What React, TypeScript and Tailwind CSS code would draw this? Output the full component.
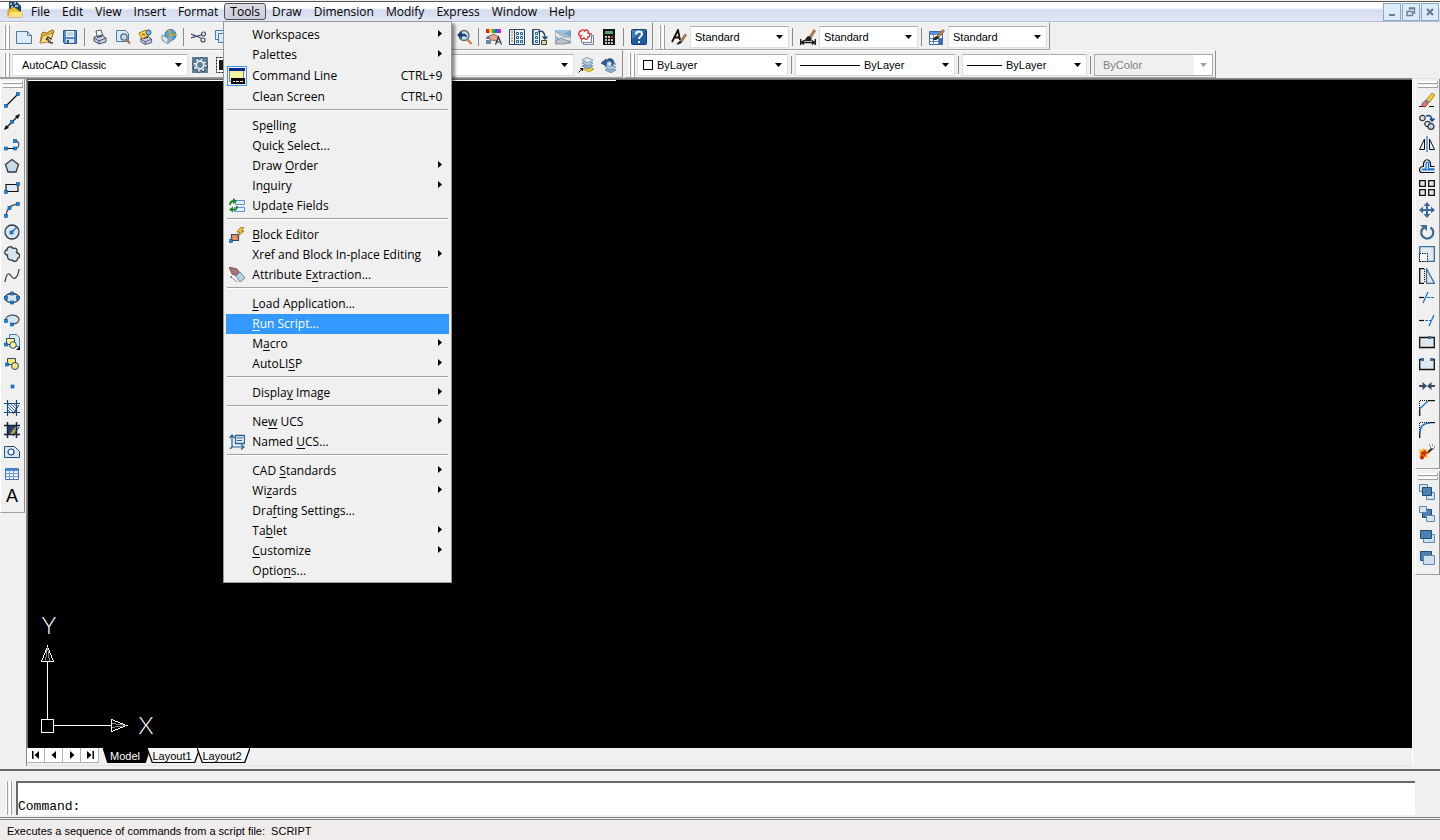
import { Fragment } from "react";
import type { ReactNode } from "react";

const INK = "#111111";
const BLUE = "#1a72cf";
const STEEL = "#3f6b99";
const NAVY = "#1f4e79";

function Dot({ x, y }: { x: number; y: number }) {
  return <rect x={x} y={y} width="3" height="3" fill="#1585e8" stroke="#0a4d93" strokeWidth=".6" />;
}

function Layers({ x, y }: { x: number; y: number }) {
  return (
    <g stroke="#5b7da3" strokeWidth=".7">
      <path d={`M${x} ${y + 6}l5-2.500 6 2.500-5 3z`} fill="#8fb0d2" />
      <path d={`M${x} ${y + 3}l5-2.500 6 2.500-5 3z`} fill="#b9cfe6" />
      <path d={`M${x} ${y}l5-2.500 6 2.500-5 3z`} fill="#dce8f3" />
    </g>
  );
}

const printer = (
  <g stroke="#4b5573" strokeWidth="1">
    <path d="M5 7L4 2l5-1 2 6" fill="#fff" />
    <path d="M2 8l8-2 4 3v4l-7 2-5-3z" fill="#c7cddd" />
    <path d="M2 9l5 3 7-3M7 12v3" fill="none" />
    <path d="M5 8.500l5-1.500" stroke="#222b45" />
  </g>
);

const ICONS: Record<string, ReactNode> = {
  new: <path d="M.5 2.500h11l4 4v8H.5zM11.500 2.500v4h4" fill="#dcebf5" stroke="#447ea4" />,
  open: (
    <>
      <path d="M1 14L3 4l3-1 1 1.500L13 1l2 1-3 9z" fill="#e8b84a" stroke="#8f6717" />
      <path d="M1 14l3-7 10-3-3 9z" fill="#f9dc83" stroke="#a97b1e" strokeWidth=".8" />
      <path d="M14 14c-4 0-5-2-5-4M7 11l2-3 3 2" fill="none" stroke="#3a3f49" strokeWidth="1.500" />
    </>
  ),
  save: (
    <>
      <path d="M1.500 1.500h13v13h-12l-1-1z" fill="#4e8cc8" stroke="#28598c" />
      <path d="M4 2h8v6H4z" fill="#eef4f9" />
      <path d="M5 4h6M5 6h6" stroke="#9ab6cf" />
      <path d="M4 10h8v4H4z" fill="#d9e3ec" />
      <path d="M5 11h2v3H5z" fill="#28598c" />
    </>
  ),
  plot: printer,
  preview: (
    <>
      <path d="M1.500 12.500v-11h9l3 3v8z" fill="#dcebf5" stroke="#447ea4" />
      <circle cx="9" cy="8" r="3.200" fill="#bcdcf4" stroke="#5a6a7d" strokeWidth="1.300" />
      <path d="M11.500 10.500L15 14.500" stroke="#b5713a" strokeWidth="2" />
    </>
  ),
  publish: (
    <>
      <g transform="translate(1 2) scale(.9)">{printer}</g>
      <path d="M1 4l7-3 3 5-7 4z" fill="#ffd445" stroke="#a8780d" />
      <circle cx="10.500" cy="3.500" r="2.500" fill="#7db4e2" stroke="#28598c" />
      <path d="M4 5l3 1" stroke="#5a4207" />
    </>
  ),
  globe: (
    <>
      <circle cx="9.500" cy="6" r="5.500" fill="#4aa3de" stroke="#2a6c9e" />
      <path d="M7 1c3 1 1 4 3 5s4-2 5 0M9 1v10" fill="none" stroke="#e9a22c" strokeWidth="1.500" />
      <path d="M11 3l3 1-1 3z" fill="#4fae4c" />
      <path d="M1 6l6 3v6l-6-4z" fill="#dbe5ee" stroke="#7890a5" />
      <path d="M7 9l4-1v4l-4 3z" fill="#8ea6bc" />
    </>
  ),
  cut: (
    <g fill="none" stroke="#3a4a66" strokeWidth="1.200">
      <path d="M0 5l10 4M0 9l10-3" />
      <circle cx="12.500" cy="5" r="2" />
      <circle cx="12" cy="11" r="2" />
    </g>
  ),
  copy: (
    <g fill="#dcebf5" stroke="#447ea4">
      <path d="M1.500 1.500h10v9h-10z" />
      <path d="M4.500 4.500h10v9h-10z" />
    </g>
  ),
  zoomPrev: (
    <>
      <circle cx="8" cy="6.500" r="5" fill="#c5dcef" stroke="#56697f" strokeWidth="1.300" />
      <path d="M1 6l5-4v3c3-1 5 0 5 4-1-2-3-2-5-1.500V10z" fill="#183f6f" />
      <path d="M11.500 10.500l4 4.500" stroke="#c8793b" strokeWidth="2" />
    </>
  ),
  properties: (
    <>
      <path d="M0 0h3v4H0z" fill="#e0231c" />
      <path d="M3 0h3v4H3z" fill="#f0d020" />
      <path d="M6 0h3v4H6z" fill="#2fae3b" />
      <path d="M9 0h3v4H9z" fill="#245ee0" />
      <path d="M12 0h3v4h-3z" fill="#d11fc4" />
      <path d="M1 8l7-3 5 3-2 4-6-1z" fill="#e0a58a" stroke="#8c4f3a" strokeWidth=".8" />
      <path d="M0 9h4M0 12h5M0 14h5" stroke="#3665a0" strokeWidth="1.300" />
      <path d="M9.500 15.500L12.500 8l3 7.500M10.500 13h4" fill="none" stroke="#234" strokeWidth="1.200" />
    </>
  ),
  designCenter: (
    <>
      <path d="M.5.5h15v15H.5z" fill="#e9f1f8" stroke="#22466e" />
      <path d="M5.500 1v14" stroke="#22466e" />
      <path d="M2 3h2M2 6h2M2 9h2M2 12h2" stroke="#d19b1a" strokeWidth="1.500" />
      <path d="M7.500 3.500h2v2h-2zM11.500 3.500h2v2h-2zM7.500 7.500h2v2h-2zM11.500 7.500h2v2h-2zM7.500 11.500h2v2h-2zM11.500 11.500h2v2h-2z" fill="#fff" stroke="#245a95" />
    </>
  ),
  toolPalettes: (
    <>
      <path d="M.5.5h7v15h-7z" fill="#e9f1f8" stroke="#22466e" />
      <path d="M3.500 3.500h2v2h-2zM3.500 7.500h2v2h-2zM3.500 11.500h2v2h-2z" fill="#fff" stroke="#245a95" />
      <path d="M1.500 1v14" stroke="#5d83ad" />
      <path d="M6 3c5-2 7 1 7 6M10.500 7.500L13 10l2.500-2.500" fill="none" stroke="#1f4e79" strokeWidth="1.500" />
      <path d="M9.500 11.500h5v4h-5z" fill="#f6d86d" stroke="#22466e" />
    </>
  ),
  sheetSet: (
    <>
      <path d="M0 1h16v14H0z" fill="#9fc0da" />
      <path d="M0 2l9 6 7 0v4l-8 1-8-6z" fill="#dfe4e8" stroke="#8b979f" strokeWidth=".8" />
      <path d="M0 12l6-3 9 4-5 2H0z" fill="#b9c2c9" stroke="#75828c" strokeWidth=".8" />
      <path d="M9 5l7-4v6z" fill="#6fa1c9" />
    </>
  ),
  markup: (
    <>
      <path d="M5.500 6.500h10v9h-10z" fill="#eceff5" stroke="#76809c" />
      <path d="M3.500 4.500h10v9h-10z" fill="#fff" stroke="#76809c" />
      <path d="M3 2c1-2 3-1 3.500 0C8 0 11 1 10 4c3 0 2 4 0 4 0 3-3 3-4 1-2 2-5 0-3-2C0 7 0 3 3 2z" fill="#fff" stroke="#e22c2c" strokeWidth="1.400" />
    </>
  ),
  calc: (
    <>
      <path d="M2 0h12v16H2z" fill="#141414" />
      <path d="M4 2h8v3H4z" fill="#58a56a" />
      <path d="M4 8h2M7 8h2M4 11h2M7 11h2M10 11h2M4 14h2M7 14h2M10 14h2" stroke="#fff" strokeWidth="1.600" />
      <path d="M10 8h2" stroke="#e22" strokeWidth="1.600" />
    </>
  ),
  help: (
    <>
      <rect x=".5" y=".5" width="15" height="15" rx="1" fill="#1d5c9e" stroke="#123f73" />
      <path d="M1 1h14L1 10z" fill="#3e80bf" />
      <path d="M5 5.500c0-4 6-4 6-.5 0 2.500-3 2.500-3 5M8 12v2" fill="none" stroke="#fff" strokeWidth="2" />
    </>
  ),
  textStyle: (
    <>
      <path d="M1 13L7 1l2 10M3 8.500h5.500" fill="none" stroke={INK} strokeWidth="1.800" />
      <path d="M9 12l5-7 1.500 1-4.500 7z" fill="#c98246" stroke="#704521" strokeWidth=".6" />
      <path d="M5 15c2 0 2-3 4-3l2 1c-1 2-4 3-6 2z" fill="#222" />
    </>
  ),
  dimStyle: (
    <>
      <path d="M.7 10v6M15.300 10v6M1 13.500h14M4 11.500l-2.500 2 2.500 2M12 11.500l2.500 2-2.500 2" fill="none" stroke={INK} strokeWidth="1.300" />
      <path d="M9 8l5-7.500L15.500 2 11 9z" fill="#c98246" stroke="#704521" strokeWidth=".6" />
      <path d="M2 12c4 0 4-5 7-5l2.500 2v3z" fill="#222" />
    </>
  ),
  tableStyle: (
    <>
      <path d="M.5 2.500h13v13H.5z" fill="#fff" stroke="#3a6cb0" />
      <path d="M1 3h12v3H1z" fill="#5d92d8" />
      <path d="M1 9.500h12M1 12.500h12M4.500 6v9M9.500 6v9" stroke="#5d86bd" />
      <path d="M10 10h3v5h-3z" fill="#3a6cb0" />
      <path d="M8 7l6-6.500 1.500 1.500L10 8.500z" fill="#c98246" stroke="#704521" strokeWidth=".6" />
      <path d="M3 11c2 0 2-4 5-4l2 1.500c-1 2-4 3.500-7 2.500z" fill="#222" />
    </>
  ),
  gear: (
    <>
      <path d="M0 0h16v16H0z" fill="#5d8099" />
      <circle cx="8" cy="8" r="6" fill="none" stroke="#2f3d48" strokeWidth="3.500" strokeDasharray="2.400 2.300" />
      <circle cx="8" cy="8" r="5.600" fill="none" stroke="#e3ebf0" strokeWidth="2.500" strokeDasharray="1.800 2.600" />
      <circle cx="8" cy="8" r="3.800" fill="#5d8099" stroke="#e9eff3" strokeWidth="1.800" />
    </>
  ),
  myWorkspace: (
    <>
      <path d="M1.500.5h14v15h-14z" fill="#fff" stroke={INK} strokeDasharray="2 1" />
      <path d="M4 3h10v10H4z" fill="#1b1b1b" />
    </>
  ),
  layerCurrent: (
    <>
      <path d="M5 12l5-2.500 6 2.500-5 3z" fill="#f4cf35" stroke="#a07d0c" strokeWidth=".7" />
      <Layers x={4} y={3} />
      <path d="M.5 15.500l4-4M2 11.500h2.500V14" fill="none" stroke={INK} />
    </>
  ),
  layerPrev: (
    <>
      <Layers x={4} y={7} />
      <path d="M0 6l5-4v2.500c1-4 8-4 8 1 0 2-2 3-3 3 2-3 0-5-2-4.500-2 0-3 2-3 5z" fill="#2b5c96" stroke="#183f6f" strokeWidth=".6" />
    </>
  ),

  // draw toolbar
  line: (
    <>
      <path d="M2 14L14 2" stroke={INK} strokeWidth="1.300" />
      <Dot x={.5} y={12.5} />
      <Dot x={12.5} y={.5} />
    </>
  ),
  xline: (
    <>
      <path d="M1 15L15 1" stroke={INK} strokeWidth="1.300" />
      <path d="M0 16l2-5 3 3zM16 0l-5 2 3 3z" fill={INK} />
      <Dot x={6.5} y={6.5} />
    </>
  ),
  pline: (
    <>
      <path d="M2 12.500h9" stroke={INK} />
      <path d="M11 5c5 0 5 7 0 7.500" fill="none" stroke="#46618a" strokeWidth="1.300" />
      <Dot x={.5} y={11} />
      <Dot x={9.5} y={11} />
      <Dot x={9.5} y={3.5} />
    </>
  ),
  polygon: <path d="M8 1.500l6.500 5-2.500 7.500H4L1.500 6.500z" fill="#c8dbea" stroke="#303841" strokeWidth="1.300" />,
  rectangle: (
    <>
      <path d="M2 4.500h12v7H2z" fill="#dce9f4" stroke={INK} strokeWidth="1.200" />
      <Dot x={.5} y={10.5} />
      <Dot x={12.5} y={2.5} />
    </>
  ),
  arc: (
    <>
      <path d="M2 14Q3 3 14 2" fill="none" stroke="#46515e" strokeWidth="1.300" />
      <Dot x={.5} y={12.5} />
      <Dot x={4} y={4.5} />
      <Dot x={12.5} y={.5} />
    </>
  ),
  circle: (
    <>
      <circle cx="8" cy="8" r="7" fill="#d6e5f2" stroke="#303841" strokeWidth="1.300" />
      <path d="M8 8l4.500-4.500" stroke={BLUE} strokeWidth="1.500" />
      <Dot x={6} y={7} />
    </>
  ),
  revcloud: <path d="M3.500 9C0 9 0 4 3 4c0-4 5-4 6-1.500 3-1 5 1 3.500 4 4 1 4 5 1 6 0 3-4 4-5 1.500C5 15 3 12 3.500 9z" fill="#d8e4ee" stroke="#303841" strokeWidth="1.300" />,
  spline: <path d="M1 14C3 2 6 6 8 9s6 1 7-8" fill="none" stroke="#3a434d" strokeWidth="1.300" />,
  ellipse: (
    <>
      <ellipse cx="8" cy="8" rx="7" ry="4.500" fill="#d6e5f2" stroke="#303841" strokeWidth="1.300" />
      <Dot x={6.5} y={2} />
      <Dot x={6.5} y={11} />
      <Dot x={.5} y={6.5} />
      <Dot x={12.5} y={6.5} />
    </>
  ),
  ellipseArc: (
    <>
      <path d="M2 9C0 2 14 1 15 7c0 4-4 5-7 5" fill="#d6e5f2" stroke="#46515e" strokeWidth="1.300" />
      <Dot x={.5} y={7.500} />
      <Dot x={6.5} y={11} />
    </>
  ),
  insertBlock: (
    <>
      <path d="M5.500.5h7l3 3v9h-10z" fill="#d8e8f3" stroke="#447ea4" />
      <path d="M2.500 4.500h8v6h-8z" fill="#ffef8e" stroke={NAVY} />
      <circle cx="9" cy="11" r="3.300" fill="#ffef8e" stroke={NAVY} />
      <path d="M16 12v4h-4z" fill={INK} />
      <Dot x={.5} y={9} />
    </>
  ),
  makeBlock: (
    <>
      <path d="M3.500 2.500h8v6h-8z" fill="#ffe26a" stroke={NAVY} />
      <circle cx="11" cy="10" r="3.500" fill="#f5e27c" stroke={NAVY} />
      <Dot x={1.5} y={7} />
    </>
  ),
  point: <Dot x={7} y={7} />,
  hatch: (
    <>
      <path d="M4 4l8 8M4 7l5 5M7 4l5 5M4 10l2 2M10 4l2 2" stroke="#3d6f9f" />
      <path d="M3.500 0v16M12.500 0v16M0 3.500h16M0 12.500h16" stroke="#1d4a78" strokeWidth="1.200" />
      <path d="M9 14l6-9" stroke="#1d4a78" />
    </>
  ),
  gradient: (
    <>
      <path d="M4 4h8v8H4z" fill="#2c4569" />
      <path d="M12 4v8H6z" fill="#b7a45a" />
      <path d="M3.500 0v16M12.500 0v16M0 3.500h16M0 12.500h16" stroke="#14253d" strokeWidth="1.500" />
      <path d="M9 14l6-9" stroke="#14253d" />
    </>
  ),
  region: (
    <>
      <path d="M.5 2.500h10l5 5v6H.5z" fill="#d8e8f4" stroke={NAVY} />
      <circle cx="7" cy="8" r="3" fill="#f4f8fb" stroke={NAVY} strokeWidth="1.200" />
    </>
  ),
  table: (
    <>
      <path d="M1.500 2.500h13v11h-13z" fill="#eef4fc" stroke="#4575bb" />
      <path d="M2 3h12v2H2z" fill="#4f86d2" />
      <path d="M2 7.500h12M2 10.500h12M5.500 5v8M9.500 5v8" stroke="#6e98d1" />
    </>
  ),

  // modify toolbar
  erase: (
    <>
      <path d="M0 14.500h7M10 14.500h5" stroke={INK} />
      <path d="M7 8l6-7 3 2-6 8z" fill="#f4c62f" stroke="#8a6a10" strokeWidth=".7" />
      <path d="M6 9l1.500-2 3 3L9 12z" fill="#5d92c9" />
      <path d="M3 12l3-3.500L9 12l-3 3-3-1z" fill="#e2766b" stroke="#8c352c" strokeWidth=".7" />
    </>
  ),
  copyObject: (
    <g stroke="#303841" strokeWidth="1.200">
      <circle cx="3.500" cy="4" r="2.700" fill="#dbe6ef" />
      <circle cx="8.500" cy="10" r="2.700" fill="#dbe6ef" />
      <circle cx="12" cy="12.500" r="2.900" fill="#c5d5e3" />
      <path d="M7 2c4-1 6 0 6 4M11 4.500L13 7l2.500-2.500" fill="none" stroke="#1c4f86" strokeWidth="1.600" />
    </g>
  ),
  mirror: (
    <>
      <path d="M5.500 3v10.500h-5zM10.500 3v10.500h5z" fill="#e8eef3" stroke={INK} />
      <path d="M8 0v16" stroke={BLUE} strokeWidth="1.200" />
    </>
  ),
  offset: (
    <>
      <path d="M15.500 14.500H3c-3.500 0-3.500-6 1.500-6C3.500-.5 12.500-.5 11.500 8.500h4" fill="#e8f1f8" stroke={INK} strokeWidth="1.200" />
      <path d="M15.500 11.800H4c-1.500-.3-1-1 3-1V6c0-2.500 2.500-2.500 2.500 0v4.800h6" fill="none" stroke={BLUE} strokeWidth="1.200" />
    </>
  ),
  array: (
    <path d="M.7.7h5.600v5.600H.7zM9.700.7h5.600v5.600H9.700zM.7 9.700h5.600v5.600H.7zM9.700 9.700h5.600v5.600H9.700z" fill="#e2ebf3" stroke={INK} strokeWidth="1.300" />
  ),
  move: (
    <>
      <path d="M8 2v12M2 8h12" stroke={STEEL} strokeWidth="2" />
      <path d="M8 0l3.500 4h-7zM8 16l3.500-4h-7zM0 8l4-3.500v7zM16 8l-4-3.500v7z" fill={STEEL} />
    </>
  ),
  rotate: (
    <>
      <path d="M5 3.500a6 6 0 1 0 6.500 0" fill="none" stroke={STEEL} strokeWidth="2.200" />
      <path d="M1 1h7v6z" fill={STEEL} />
    </>
  ),
  scale: (
    <>
      <path d="M.7.7h14.600v14.600H.7z" fill="#e2ebf4" stroke={STEEL} strokeWidth="1.300" />
      <path d="M.5 7.500h8v8h-8z" fill="#f6f9fb" stroke={INK} strokeDasharray="1.500 1" />
    </>
  ),
  stretch: (
    <>
      <path d="M7.500.5v15h8z" fill="#dce8f2" stroke={STEEL} strokeWidth="1.300" />
      <path d="M5 .7H.7v14.600H5" fill="none" stroke={INK} strokeWidth="1.300" />
      <path d="M5.500 1v14" stroke={INK} strokeDasharray="1 1" />
    </>
  ),
  trim: (
    <>
      <path d="M0 7.500h5" stroke={INK} strokeWidth="1.200" />
      <path d="M8 7.500h8" stroke={BLUE} strokeDasharray="3 1" />
      <path d="M4 13L9 2" stroke={BLUE} strokeWidth="1.300" />
    </>
  ),
  extend: (
    <>
      <path d="M0 8.500h5" stroke={INK} strokeWidth="1.200" />
      <path d="M6 8.500h6" stroke={BLUE} strokeDasharray="3 1" />
      <path d="M10 14l5-11" stroke={BLUE} strokeWidth="1.300" />
    </>
  ),
  breakPoint: (
    <>
      <path d="M.7 3.500h14.600v10H.7z" fill="#dfe8f0" stroke={INK} strokeWidth="1.300" />
      <path d="M9 2h3v3H9z" fill={STEEL} />
    </>
  ),
  breakGap: (
    <>
      <path d="M1 3h14v11H1z" fill="#dfe8f0" />
      <path d="M3 3.500H.7v10h14.600v-10H13" fill="none" stroke={INK} strokeWidth="1.300" />
      <path d="M2 2h3v3H2zM11 2h3v3h-3z" fill={STEEL} />
    </>
  ),
  join: (
    <>
      <path d="M0 8h5M11 8h5" stroke={INK} strokeWidth="1.500" />
      <path d="M3.500 4L8 8l-4.500 4zM12.500 4L8 8l4.500 4z" fill="#2d4f6c" />
    </>
  ),
  chamfer: (
    <>
      <path d="M.7 16V8.500M9 .7h7" stroke={INK} strokeWidth="1.300" />
      <path d="M.5 8V.5H8" fill="none" stroke={INK} strokeDasharray="1 1" />
      <path d="M1 8.500L9 1" stroke={BLUE} strokeWidth="1.300" />
    </>
  ),
  fillet: (
    <>
      <path d="M.7 16V9M9 .7h7" stroke={INK} strokeWidth="1.300" />
      <path d="M.5 8V.5H8" fill="none" stroke={INK} strokeDasharray="1 1" />
      <path d="M1 11C1 4 4 1.500 11 1" fill="none" stroke={BLUE} strokeWidth="1.600" />
    </>
  ),
  explode: (
    <>
      <path d="M0 5l3 1 1-2 2 2 3-1-1 3 3 1-3 2 1 3-3-1-2 2-1-3-3 1 1-3-2-1 2-1z" fill="#f6b921" />
      <path d="M2 8l3-1 1-2 1 3 3 1-3 1-1 3-2-2-2 1z" fill="#dc2b1e" />
      <circle cx="3" cy="13.500" r="2" fill="#c3241a" />
      <path d="M8 8l4-4 2 1-4 4z" fill="#2d2d33" />
      <path d="M11 3h1M13 1h1M15 3h1M13 5h2M10 1h1" stroke="#5c7896" strokeWidth="1.500" />
    </>
  ),

  // draw order toolbar
  bringFront: (
    <>
      <path d="M.5.5h8v7h-8zM7.500 8.500h8v7h-8z" fill="#d5e4ef" stroke="#5b87b2" />
      <path d="M3.500 3.500h9v8h-9z" fill="#4c7fb2" stroke={NAVY} />
    </>
  ),
  sendBack: (
    <>
      <path d="M3.500 3.500h9v8h-9z" fill="#4c7fb2" stroke={NAVY} />
      <path d="M.5.5h7v6h-7zM7.500 9.500h8v6h-8z" fill="#d5e4ef" stroke="#5b87b2" />
    </>
  ),
  bringAbove: (
    <>
      <path d="M4.500 6.500h11v8h-11z" fill="#cfe0ec" stroke="#5b87b2" />
      <path d="M1.500 2.500h11v8h-11z" fill="#4c7fb2" stroke={NAVY} />
    </>
  ),
  sendUnder: (
    <>
      <path d="M1.500 1.500h11v9h-11z" fill="#4c7fb2" stroke={NAVY} />
      <path d="M4.500 5.500h11v9h-11z" fill="#cfe0ec" stroke="#5b87b2" />
    </>
  ),

  // tools menu
  commandLine: (
    <>
      <path d="M.5.500h14v13H.5z" fill="#f4f3a0" stroke="#85858a" />
      <path d="M0 0h16v3H0z" fill="#06298f" />
      <path d="M2 10h14v6H2z" fill="#0b0b0b" />
      <path d="M4 13.500h2M7 13.500h3M11 13.500h3" stroke="#fff" />
    </>
  ),
  updateFields: (
    <>
      <path d="M6.500 2.500h9v4h-9zM5.500 9.500h10v4h-10z" fill="#e3efff" stroke="#5c92dd" />
      <path d="M1 7c0-3 2-4 4-4M8 8c0 4-2 4-5 3.500" fill="none" stroke="#128a1d" strokeWidth="1.800" />
      <path d="M4 0v6l4-3zM4 8.500v6L0 11.500z" fill="#128a1d" />
    </>
  ),
  blockEditor: (
    <>
      <path d="M2.500 7.500h7v6h-7z" fill="#f58a5c" stroke="#2c4d7c" strokeWidth="1.200" />
      <path d="M12 0L8 5h3L8 10l7-6h-3l3-4z" fill="#ffd83a" stroke="#7a5906" strokeWidth=".8" />
      <Dot x={.5} y={12.5} />
    </>
  ),
  attributeExtraction: (
    <>
      <path d="M0 0l8 2 3 4-3 3-5-2z" fill="#a87672" stroke="#6a4543" strokeWidth=".8" />
      <path d="M7 9l4-4 5 6-5 4z" fill="#b9d2e4" stroke="#56728a" strokeWidth=".8" />
      <path d="M2 9v3M2 10l6 5" stroke="#56565c" strokeDasharray="2 1" fill="none" />
    </>
  ),
  namedUcs: (
    <>
      <path d="M6.500 1.500h9v8h-9z" fill="#eaf3fb" stroke="#2a6296" strokeWidth="1.300" />
      <path d="M8 4h6M8 6.500h5" stroke="#2a6296" />
      <path d="M3 1v12h12M.5 4L3 1l2.500 3M1 15l3-3M12 10.500l3 2.500-3 2.500" fill="none" stroke="#2a6296" strokeWidth="1.200" />
    </>
  ),
};

function Icon({ name }: { name: string }) {
  return (
    <svg viewBox="0 0 16 16" className="size-4 shrink-0" aria-hidden="true">
      {ICONS[name]}
    </svg>
  );
}

function ToolButton({ name, width = "w-[23px]" }: { name: string; width?: string }) {
  return (
    <button type="button" aria-label={name} className={`flex h-[22px] shrink-0 items-center justify-center ${width}`}>
      <Icon name={name} />
    </button>
  );
}

function Separator() {
  return <div className="mx-[3px] h-[18px] w-px shrink-0 bg-[#8c8c8c]" />;
}

function Grip() {
  return (
    <div className="mr-0.5 flex shrink-0 gap-px self-stretch pl-1">
      <div className="w-[2px] border-r border-[#a0a0a0] bg-white" />
      <div className="w-[3px] border-r border-[#a0a0a0] bg-white" />
    </div>
  );
}

function Toolbar({ children, className = "" }: { children: ReactNode; className?: string }) {
  return (
    <div className={`flex h-7 shrink-0 items-center border-t border-r border-b border-t-white border-r-[#8f8f8f] border-b-[#a0a0a0] pt-0.5 pr-0.5 ${className}`}>
      <Grip />
      {children}
    </div>
  );
}

type ComboProps = {
  label: string;
  value: string;
  className: string;
  lead?: ReactNode;
  disabled?: boolean;
};

function Combo({ label, value, className, lead, disabled }: ComboProps) {
  return (
    <div
      className={`relative flex h-[22px] shrink-0 items-center border ${
        disabled ? "border-[#a9a9ae] bg-[#f0f0f0] text-[#808080]" : "border-[#dcdfe6] border-t-[#abadb3] bg-white text-black"
      } ${className}`}
    >
      {lead}
      <select
        aria-label={label}
        disabled={disabled}
        className="h-full min-w-0 flex-1 appearance-none bg-transparent pr-5 text-[11px] leading-4 outline-none"
      >
        <option>{value}</option>
      </select>
      <span className={`pointer-events-none absolute inset-y-0 right-0 flex w-[18px] items-center justify-center ${disabled ? "bg-white" : ""}`}>
        <svg viewBox="0 0 7 4" className="h-1 w-[7px]" aria-hidden="true">
          <path d="M0 0h7L3.500 4z" fill={disabled ? "#a0a0a0" : "#000"} />
        </svg>
      </span>
    </div>
  );
}

type MenuEntry = {
  // an ampersand precedes the access key
  label: string;
  icon?: string;
  shortcut?: string;
  submenu?: boolean;
  active?: boolean;
  checked?: boolean;
};

const TOOLS_MENU: MenuEntry[][] = [
  [
    { label: "Workspaces", submenu: true },
    { label: "Palettes", submenu: true },
    { label: "Command Line", icon: "commandLine", shortcut: "CTRL+9", checked: true },
    { label: "Clean Screen", shortcut: "CTRL+0" },
  ],
  [
    { label: "Sp&elling" },
    { label: "Quic&k Select..." },
    { label: "Draw &Order", submenu: true },
    { label: "In&quiry", submenu: true },
    { label: "Upda&te Fields", icon: "updateFields" },
  ],
  [
    { label: "&Block Editor", icon: "blockEditor" },
    { label: "Xref and Block In-place Editing", submenu: true },
    { label: "Attribute E&xtraction...", icon: "attributeExtraction" },
  ],
  [
    { label: "&Load Application..." },
    { label: "&Run Script...", active: true },
    { label: "M&acro", submenu: true },
    { label: "AutoLI&SP", submenu: true },
  ],
  [{ label: "Displa&y Image", submenu: true }],
  [
    { label: "Ne&w UCS", submenu: true },
    { label: "Named &UCS...", icon: "namedUcs" },
  ],
  [
    { label: "CAD &Standards", submenu: true },
    { label: "Wi&zards", submenu: true },
    { label: "Dra&fting Settings..." },
    { label: "Ta&blet", submenu: true },
    { label: "&Customize", submenu: true },
    { label: "Optio&ns..." },
  ],
];

function MenuLabel({ text }: { text: string }) {
  const at = text.indexOf("&");
  if (at < 0) return <>{text}</>;
  return (
    <>
      {text.slice(0, at)}
      <span className="underline underline-offset-2">{text[at + 1]}</span>
      {text.slice(at + 2)}
    </>
  );
}

function ToolsMenu() {
  return (
    <div
      role="menu"
      className="absolute top-full left-[-1px] z-10 w-[229px] border border-[#979797] bg-[#f0f0f0] px-0.5 pt-[3px] pb-px shadow-[3px_3px_3px_rgba(0,0,0,0.45)]"
    >
      {TOOLS_MENU.map((group, i) => (
        <Fragment key={i}>
          {i > 0 && <div className="mx-px mt-0.5 mb-[5px] h-[2px] border-t border-[#a0a0a0] bg-white" />}
          {group.map((item) => (
            <button
              key={item.label}
              type="button"
              role="menuitem"
              className={`flex w-full items-center pr-[7px] text-left whitespace-nowrap ${item.checked ? "h-[22px]" : "h-5"} ${
                item.active ? "bg-[#3399ff] text-white" : "text-black"
              }`}
            >
              <span className={`mr-[5px] ml-px flex shrink-0 items-center justify-center ${item.checked ? "size-5 border border-[#3399ff]" : "size-5"}`}>
                {item.icon && <Icon name={item.icon} />}
              </span>
              <span className="flex-1">
                <MenuLabel text={item.label} />
              </span>
              {item.shortcut}
              {item.submenu && (
                <svg viewBox="0 0 4 7" className="mb-1 h-[7px] w-1" aria-hidden="true">
                  <path d="M0 0l4 3.500L0 7z" fill="#000" />
                </svg>
              )}
            </button>
          ))}
        </Fragment>
      ))}
    </div>
  );
}

const MENUS = ["File", "Edit", "View", "Insert", "Format", "Tools", "Draw", "Dimension", "Modify", "Express", "Window", "Help"];

const WINDOW_BUTTONS: [string, ReactNode][] = [
  ["Minimize", <path d="M2 7h6v2H2z" fill="#6a7f92" />],
  ["Restore", <path d="M3.500 3V1h5v5h-2M1 4.500h5.500v4H1zM3 1.500h6M1 4.500h6" fill="none" stroke="#6a7f92" strokeWidth="1.400" />],
  ["Close", <path d="M2 2l6 6M8 2L2 8" stroke="#6a7f92" strokeWidth="2.200" />],
];

function MenuBar() {
  return (
    <header className="flex h-[21px] items-stretch border-t border-b border-t-[#555] border-b-[#b6bcd0] bg-linear-to-b from-white from-30% via-[#d5dbed] via-45% to-[#e2e7f6] pl-[7px] font-['Open_Sans','Noto_Sans',sans-serif] text-[12px] leading-4">
      <svg viewBox="0 0 16 16" className="mr-0.5 size-4 shrink-0" aria-hidden="true">
        <path d="M2 0h8l4 4v6H2z" fill="#1c4a78" />
        <path d="M3 2h2M7 1h2M4 5h2M8 4h3" stroke="#d5e6f5" strokeWidth="1.500" />
        <path d="M1 15V8l6-3 8 6v4z" fill="#f2c12e" stroke="#a47c0f" strokeWidth=".7" />
        <path d="M1 15l3-5h11v5z" fill="#ffe278" />
      </svg>
      <nav className="flex flex-1 items-stretch" aria-label="Main menu">
        {MENUS.map((name) =>
          name === "Tools" ? (
            <div key={name} className="relative flex">
              <button
                type="button"
                aria-haspopup="menu"
                aria-expanded="true"
                className="my-px flex items-center rounded-[3px] border border-[#4d4f58] bg-linear-to-b from-[#dcdde4] to-[#c9ccd9] px-[5px]"
              >
                {name}
              </button>
              <ToolsMenu />
            </div>
          ) : (
            <button key={name} type="button" className="flex items-center px-[6px]">
              {name}
            </button>
          ),
        )}
      </nav>
      <div className="flex items-start gap-px pt-px pr-px">
        {WINDOW_BUTTONS.map(([label, glyph]) => (
          <button
            key={label}
            type="button"
            aria-label={label}
            className="flex h-[18px] w-[18px] items-center justify-center border border-[#90a9c0] bg-[#dcebf8]"
          >
            <svg viewBox="0 0 10 10" className="size-[10px]" aria-hidden="true">
              {glyph}
            </svg>
          </button>
        ))}
      </div>
    </header>
  );
}

function DockBar({ icons, children }: { icons: string[]; children?: ReactNode }) {
  return (
    <div className="flex w-[25px] flex-col items-start border-r border-b border-l border-r-[#8f8f8f] border-b-[#a0a0a0] border-l-white pt-0.5 pb-[5px]">
      <div className="mb-px ml-0.5 flex w-5 flex-col gap-px">
        <div className="h-[3px] border-r border-b border-[#a0a0a0] bg-white" />
        <div className="h-[3px] border-r border-b border-[#a0a0a0] bg-white" />
      </div>
      {icons.map((name) => (
        <ToolButton key={name} name={name} width="w-[22px]" />
      ))}
      {children}
    </div>
  );
}

const DRAW = [
  "line", "xline", "pline", "polygon", "rectangle", "arc", "circle", "revcloud", "spline",
  "ellipse", "ellipseArc", "insertBlock", "makeBlock", "point", "hatch", "gradient", "region", "table",
];
const MODIFY = [
  "erase", "copyObject", "mirror", "offset", "array", "move", "rotate", "scale", "stretch",
  "trim", "extend", "breakPoint", "breakGap", "join", "chamfer", "fillet", "explode",
];
const ORDER = ["bringFront", "sendBack", "bringAbove", "sendUnder"];

function UcsIcon() {
  return (
    <svg
      viewBox="0 0 120 140"
      className="absolute bottom-0 left-3 h-[140px] w-[120px] font-['Lato'] text-[24px] font-light"
      fill="none"
      stroke="#fff"
      shapeRendering="crispEdges"
      aria-label="UCS icon"
    >
      <path d="M1.500 111.500h12v13h-12zM7.500 111V53M14 117.500h58" />
      <path d="M7.500 38.500l-6 15h12zM86.500 117.500l-15-6v12z" />
      <path d="M7.500 39l-2 14M7.500 39l2 14M86 117.500l-14-2M86 117.500l-14 2" stroke="#888" />
      <text x="9" y="26" textAnchor="middle" fill="#fff" stroke="none">Y</text>
      <text x="106" y="126" textAnchor="middle" fill="#fff" stroke="none">X</text>
    </svg>
  );
}

const TAB_STEPS: [string, string][] = [
  ["First tab", "M1 1h1.500v8H1zM8 1v8L3.500 5z"],
  ["Previous tab", "M7 1v8L2.500 5z"],
  ["Next tab", "M3 1v8l4.500-4z"],
  ["Last tab", "M2 1v8l4.500-4zM7.500 1H9v8H7.500z"],
];

function LayoutTabs() {
  return (
    <div className="flex h-[18px] items-start border-b border-[#e3e3e3] bg-[#f0f0f0] text-[11px] leading-[14px]">
      {TAB_STEPS.map(([label, d]) => (
        <button
          key={label}
          type="button"
          aria-label={label}
          className="flex h-[15px] w-[18px] items-center justify-center border-r border-b border-[#b0b0b0] bg-white"
        >
          <svg viewBox="0 0 10 10" className="size-[10px]" aria-hidden="true">
            <path d={d} />
          </svg>
        </button>
      ))}
      <div className="ml-1 flex" role="tablist">
        {["Model", "Layout1", "Layout2"].map((name, i) => (
          <button
            key={name}
            type="button"
            role="tab"
            aria-selected={i === 0}
            className={`relative h-[15px] ${i === 0 ? "w-[44px] text-white" : "w-[50px] text-black"}`}
          >
            <svg viewBox="0 0 50 15" preserveAspectRatio="none" className="absolute inset-y-0 left-0 h-full w-[calc(100%+3px)]" aria-hidden="true">
              <path d="M0 0l5 14.500h40L50 0" fill={i === 0 ? "#000" : "#f7f7f7"} stroke="#000" strokeWidth="1.200" />
            </svg>
            <span className="relative">{name}</span>
          </button>
        ))}
      </div>
    </div>
  );
}

function Swatch() {
  return <span className="mr-1 ml-[5px] size-[10px] shrink-0 border border-black bg-white" />;
}

export default function App() {
  return (
    <div className="flex min-h-screen flex-col bg-[#f0f0f0] pt-px font-['Liberation_Sans',Arial,sans-serif] text-[12px] text-black">
      <MenuBar />

      <div className="flex">
        <Toolbar>
          {["new", "open", "save"].map((n) => <ToolButton key={n} name={n} />)}
          <Separator />
          {["plot", "preview", "publish", "globe"].map((n) => <ToolButton key={n} name={n} />)}
          <Separator />
          <ToolButton name="cut" />
          <ToolButton name="copy" />
          <div className="w-[219px]" />
          <ToolButton name="zoomPrev" />
          <Separator />
          {["properties", "designCenter", "toolPalettes", "sheetSet", "markup", "calc"].map((n) => <ToolButton key={n} name={n} />)}
          <Separator />
          <ToolButton name="help" />
        </Toolbar>
        <Toolbar className="ml-0.5">
          <ToolButton name="textStyle" />
          <Combo label="Text style" value="Standard" className="w-[99px] pl-1" />
          <Separator />
          <ToolButton name="dimStyle" />
          <Combo label="Dimension style" value="Standard" className="w-[99px] pl-1" />
          <Separator />
          <ToolButton name="tableStyle" />
          <Combo label="Table style" value="Standard" className="w-[99px] pl-1" />
        </Toolbar>
      </div>

      <div className="flex">
        <Toolbar>
          <Combo label="Workspace" value="AutoCAD Classic" className="w-[176px] pl-[9px]" />
          <ToolButton name="gear" />
          <ToolButton name="myWorkspace" />
          <Combo label="Layer" value="" className="ml-[120px] w-[220px]" />
          <ToolButton name="layerCurrent" />
          <ToolButton name="layerPrev" />
        </Toolbar>
        <Toolbar className="ml-0.5">
          <Combo label="Color" value="ByLayer" className="w-[151px]" lead={<Swatch />} />
          <Separator />
          <Combo label="Linetype" value="ByLayer" className="w-[160px]" lead={<span className="mr-1 ml-1 h-px w-[60px] shrink-0 bg-black" />} />
          <Separator />
          <Combo label="Lineweight" value="ByLayer" className="w-[125px]" lead={<span className="mr-1 ml-1 h-px w-[35px] shrink-0 bg-black" />} />
          <Separator />
          <Combo label="Plot style" value="ByColor" className="w-[119px] pl-2" disabled />
        </Toolbar>
      </div>

      <main className="flex flex-1">
        <aside className="w-[26px] shrink-0 border-t border-[#a0a0a0]" aria-label="Draw">
          <DockBar icons={DRAW}>
            <button type="button" aria-label="Multiline text" className="h-[22px] w-[22px] text-[18px] leading-[22px]">
              A
            </button>
          </DockBar>
        </aside>
        <div className="flex min-w-0 flex-1 flex-col border-t border-r border-l border-t-[#8a8a8a] border-r-white border-l-[#8a8a8a]">
          <div className="relative flex-1 border-t border-l border-[#696969] bg-black">
            <div className="h-px w-[588px] bg-white" />
            <UcsIcon />
          </div>
          <LayoutTabs />
        </div>
        <aside className="flex w-[27px] shrink-0 flex-col gap-0.5 border-t border-[#e3e3e3] pl-0.5" aria-label="Modify">
          <DockBar icons={MODIFY} />
          <DockBar icons={ORDER} />
        </aside>
      </main>

      <section className="mt-[3px] border-t-2 border-[#696969] pt-[10px] pb-0.5">
        <div className="flex pl-0.5">
          <Grip />
          <label className="mr-[25px] ml-0.5 flex h-[34px] flex-1 items-end border-t-2 border-l-2 border-[#696969] bg-white font-['Liberation_Mono',monospace] text-[13px] leading-4">
            Command:
            <input type="text" aria-label="Command" className="ml-1 min-w-0 flex-1 bg-transparent outline-none" />
          </label>
        </div>
      </section>

      <footer className="border-t border-[#808080] pt-px">
        <p className="border-t border-[#808080] bg-[#f0eceb] pt-0.5 pl-[7px] text-[11px] leading-[18px] whitespace-pre">
          Executes a sequence of commands from a script file:  SCRIPT
        </p>
      </footer>
    </div>
  );
}
